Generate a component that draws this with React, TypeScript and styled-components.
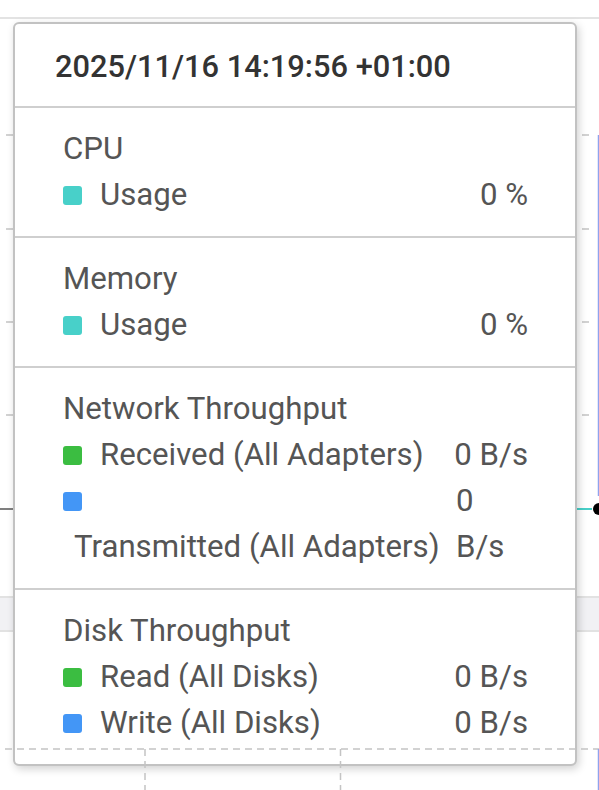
import React from "react";
import styled, { createGlobalStyle } from "styled-components";

type Item = { name: string; value: string; color: string; wrapped?: boolean };
type Section = { title: string; items: Item[] };

const COLORS = {
  teal: "#48d0c9",
  green: "#3bbd41",
  blue: "#4396f6",
};

const sections: Section[] = [
  { title: "CPU", items: [{ name: "Usage", value: "0 %", color: COLORS.teal }] },
  { title: "Memory", items: [{ name: "Usage", value: "0 %", color: COLORS.teal }] },
  {
    title: "Network Throughput",
    items: [
      { name: "Received (All Adapters)", value: "0 B/s", color: COLORS.green },
      { name: "Transmitted (All Adapters)", value: "0 B/s", color: COLORS.blue, wrapped: true },
    ],
  },
  {
    title: "Disk Throughput",
    items: [
      { name: "Read (All Disks)", value: "0 B/s", color: COLORS.green },
      { name: "Write (All Disks)", value: "0 B/s", color: COLORS.blue },
    ],
  },
];

const gridRows = [116, 210, 303, 396];

const App: React.FC = () => {
  return (
    <Page>
      <GlobalStyle />
      <TopBar />
      <UpperChart width="599" height="577" viewBox="0 0 599 577">
        {gridRows.map((y) => (
          <line key={y} x1="6" x2="594" y1={y} y2={y} stroke="#c4c4c4" strokeWidth="1.5" strokeDasharray="7 5" />
        ))}
        <line x1="0" x2="560" y1="490" y2="490" stroke="#555" strokeWidth="1.5" />
        <line x1="560" x2="592" y1="490" y2="490" stroke={COLORS.teal} strokeWidth="2" />
        <line x1="598.5" x2="598.5" y1="116" y2="477" stroke="#8fa3ee" strokeWidth="1.5" />
        <circle cx="599" cy="490" r="6" fill="#000" />
      </UpperChart>
      <ZoomBand />
      <LowerChart width="599" height="159" viewBox="0 0 599 159">
        <line x1="5" x2="599" y1="117" y2="117" stroke="#c4c4c4" strokeWidth="1.5" strokeDasharray="7 5" />
        <line x1="145" x2="145" y1="117" y2="159" stroke="#c4c4c4" strokeWidth="1.5" strokeDasharray="7 5" />
        <line x1="340.5" x2="340.5" y1="117" y2="159" stroke="#c4c4c4" strokeWidth="1.5" strokeDasharray="7 5" />
        <line x1="598.5" x2="598.5" y1="117" y2="159" stroke="#8fa3ee" strokeWidth="1.5" />
      </LowerChart>

      <Tooltip>
        <TooltipHeader>2025/11/16 14:19:56 +01:00</TooltipHeader>
        {sections.map((section) => (
          <TooltipSection key={section.title}>
            <SectionTitle>{section.title}</SectionTitle>
            {section.items.map((item) =>
              item.wrapped ? (
                <WrappedRow key={item.name}>
                  <div>
                    <SwatchLine>
                      <Swatch color={item.color} />
                    </SwatchLine>
                    <WrappedLabel>{item.name}</WrappedLabel>
                  </div>
                  <WrappedValue>
                    {item.value.split(" ").map((part) => (
                      <span key={part}>{part}</span>
                    ))}
                  </WrappedValue>
                </WrappedRow>
              ) : (
                <Row key={item.name}>
                  <Swatch color={item.color} />
                  <Label>{item.name}</Label>
                  <Value>{item.value}</Value>
                </Row>
              )
            )}
          </TooltipSection>
        ))}
      </Tooltip>
    </Page>
  );
};

const GlobalStyle = createGlobalStyle`
  html, body {
    margin: 0;
    padding: 0;
    background: #fff;
  }
  body {
    font-family: Roboto, "Liberation Sans", sans-serif;
  }
`;

const Page = styled.div`
  position: relative;
  width: 599px;
  height: 790px;
  overflow: hidden;
  background: #fff;
`;

const TopBar = styled.div`
  height: 17px;
  border-bottom: 2px solid #e3e3e3;
`;

const UpperChart = styled.svg`
  display: block;
`;

const ZoomBand = styled.div`
  height: 32px;
  background: #f1f1f4;
  border-top: 2px solid #e2e2e2;
  border-bottom: 2px solid #e2e2e2;
`;

const LowerChart = styled.svg`
  display: block;
  position: relative;
  z-index: 2;
`;

const Tooltip = styled.div`
  position: absolute;
  left: 13px;
  top: 22px;
  width: 564px;
  box-sizing: border-box;
  background: #fff;
  border: 2px solid #c2c2c2;
  border-radius: 6px;
  box-shadow: 2px 3px 8px rgba(0, 0, 0, 0.18);
  z-index: 1;
  color: #555;
  font-size: 31.2px;
  line-height: 46px;
`;

const TooltipHeader = styled.div`
  padding: 20px 40px 16px;
  color: #333;
  font-size: 30.8px;
  font-weight: 500;
  border-bottom: 2px solid #cfcfcf;
`;

const TooltipSection = styled.div`
  padding: 18px 47px 18px 48px;
  &:not(:last-child) {
    border-bottom: 2px solid #cfcfcf;
  }
`;

const SectionTitle = styled.div`
  white-space: nowrap;
`;

const Row = styled.div`
  display: flex;
  align-items: center;
  white-space: nowrap;
`;

const Swatch = styled.span<{ color: string }>`
  flex: none;
  width: 19px;
  height: 19px;
  border-radius: 3px;
  background: ${({ color }) => color};
`;

const Label = styled.span`
  margin-left: 18px;
`;

const Value = styled.span`
  margin-left: auto;
`;

const WrappedRow = styled.div`
  display: flex;
  justify-content: space-between;
  white-space: nowrap;
`;

const SwatchLine = styled.div`
  display: flex;
  align-items: center;
  height: 46px;
`;

const WrappedLabel = styled.div`
  padding-left: 11px;
`;

const WrappedValue = styled.div`
  display: flex;
  flex-direction: column;
  width: 72px;
`;

export default App;
